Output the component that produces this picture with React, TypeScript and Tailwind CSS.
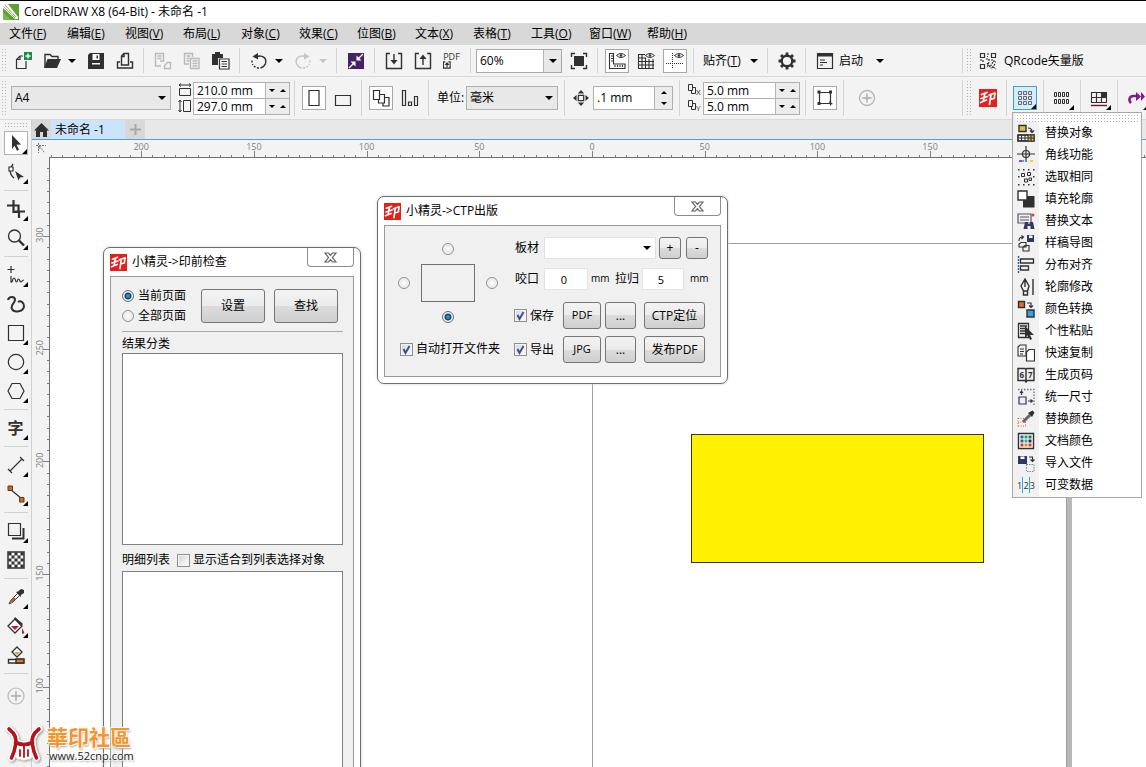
import React from 'react';

type Kids = { children?: React.ReactNode };

function Svg({ s = 18, children }: { s?: number } & Kids) {
  return (
    <svg width={s} height={s} viewBox="0 0 18 18" fill="none" stroke="#303030" strokeWidth="1.4" className="shrink-0" aria-hidden="true">
      {children}
    </svg>
  );
}

const F = { fill: '#303030', stroke: 'none' };

/* ---------- small shared parts ---------- */

function Caret({ up = false, small = false, color = '#000' }: { up?: boolean; small?: boolean; color?: string }) {
  return (
    <svg width={small ? 6 : 8} height={small ? 3 : 4} viewBox="0 0 8 4" aria-hidden="true" className="shrink-0">
      <path d={up ? 'M0 4h8L4 0z' : 'M0 0h8L4 4z'} fill={color} />
    </svg>
  );
}

function Drop({ label, color }: { label: string; color?: string }) {
  return (
    <button aria-label={label} className="flex h-6 w-[15px] shrink-0 items-center pl-0.5">
      <Caret color={color} />
    </button>
  );
}

function Sep() {
  return (
    <div className="flex w-[9px] shrink-0 justify-center self-stretch">
      <div className="w-px bg-[#d4d4d4]" />
    </div>
  );
}

function Grip() {
  return (
    <div className="mx-px w-1.5 shrink-0 self-stretch bg-[radial-gradient(#b4b4b4_0.8px,transparent_1px)] bg-[size:3px_3px]" />
  );
}

function Tool({ label, boxed = false, children }: { label: string; boxed?: boolean } & Kids) {
  return (
    <div className="flex w-[29px] shrink-0 justify-center">
      <button
        aria-label={label}
        className={
          boxed
            ? 'flex h-6 w-6 items-center justify-center border border-[#a8a8a8] bg-white'
            : 'flex h-6 w-6 items-center justify-center'
        }
      >
        {children}
      </button>
    </div>
  );
}

function Corner() {
  return (
    <svg width="5" height="5" viewBox="0 0 5 5" className="absolute right-0 bottom-0" aria-hidden="true">
      <path d="M5 0v5H0z" fill="#000" />
    </svg>
  );
}

function Seal({ s = 17 }: { s?: number }) {
  return (
    <svg width={s} height={s} viewBox="0 0 18 18" className="shrink-0" aria-hidden="true">
      <path d="M0 0h18v18H0z" fill="#e3201b" />
      <g fill="none" stroke="#fff" strokeWidth="1.7" strokeLinecap="round" strokeLinejoin="round">
        <path d="M8 3.500 2.500 5.500M2 9.500 8.500 7.500M1.500 13.500 7.500 11M5.800 5 4.300 12M10 6l6-2-.8 5.500-3.200.8M12 5.500 10.500 15.500" />
      </g>
    </svg>
  );
}

function Spin({ label }: { label: string }) {
  return (
    <div className="flex w-6 items-center justify-around border-l border-[#b4b4b4] bg-[#ececec]">
      <button aria-label={label + ' down'} className="flex h-full flex-1 items-center justify-center">
        <Caret small />
      </button>
      <button aria-label={label + ' up'} className="flex h-full flex-1 items-center justify-center">
        <Caret small up />
      </button>
    </div>
  );
}

function PairField({ items }: { items: { label: string; value: string }[] }) {
  return (
    <div className="w-[97px] shrink-0 border border-[#b0b0b0] bg-white">
      {items.map((it, i) => (
        <div key={it.label} className={i ? 'flex h-4 border-t border-[#b0b0b0]' : 'flex h-[15px]'}>
          <input aria-label={it.label} defaultValue={it.value} className="w-0 flex-1 bg-white pl-[3px] text-xs leading-[15px] outline-none" />
          <Spin label={it.label} />
        </div>
      ))}
    </div>
  );
}

/* ---------- menu and toolbars ---------- */

const MENUS: [string, string][] = [
  ['文件', 'F'], ['编辑', 'E'], ['视图', 'V'], ['布局', 'L'], ['对象', 'C'], ['效果', 'C'],
  ['位图', 'B'], ['文本', 'X'], ['表格', 'T'], ['工具', 'O'], ['窗口', 'W'], ['帮助', 'H'],
];

function TitleBar() {
  return (
    <header className="flex h-[23px] shrink-0 items-center gap-[5px] border-t border-black bg-white pl-[3px]">
      <svg width="16" height="16" viewBox="0 0 16 16" aria-hidden="true">
        <path d="M0 0h16v16H0z" fill="#5aa332" />
        <path d="M0 0h5l10 13v2H12L0 4z" fill="#fff" />
        <path d="m2 1 11 12M1 3l11 11" stroke="#5aa332" strokeWidth=".7" />
        <path d="M0 8l8 8H0z" fill="#79b84a" />
      </svg>
      <h1 className="text-xs">CorelDRAW X8 (64-Bit) - 未命名 -1</h1>
    </header>
  );
}

function MenuBar() {
  return (
    <nav className="flex h-[22px] shrink-0 items-center bg-[#d8d8d8] pl-[9px]">
      {MENUS.map(([name, k]) => (
        <button key={name} className="w-[58px] text-left text-xs whitespace-nowrap">
          {name}(<u>{k}</u>)
        </button>
      ))}
    </nav>
  );
}

function StandardBar() {
  return (
    <div className="flex h-8 shrink-0 border-b border-[#d9d9d9] py-[3px]">
      <div className="flex min-w-0 flex-1 items-center overflow-hidden">
        <Grip />
        <Tool label="New">
          <Svg><path d="M9 4H6L2.500 7.500v9h9.500V9M2.500 7.500H6V4" strokeWidth="1.200" /><path d="M10 0h8v8h-8z" fill="#178c46" stroke="none" /><path d="M14 1.500v5M11.500 4h5" stroke="#fff" /></Svg>
        </Tool>
        <Tool label="Open">
          <Svg><path d="M2 15.500V2.500h5l2 2h6v3" /><path d="M1 16 4.500 7H18l-4 9z" {...F} /></Svg>
        </Tool>
        <Drop label="Recent files" />
        <Tool label="Save">
          <Svg><path d="M1 3l2-2h14v16H1z" {...F} /><path d="M5.500 2h7v6h-7zM5 11h8v1.500H5z" fill="#fff" stroke="none" /><path d="M9.500 3.500h1.500v3H9.500z" {...F} /></Svg>
        </Tool>
        <Tool label="Print">
          <Svg><path d="M4 10H1.500v6h15v-6H14M5.500 13V4l2.500-2.500h4.500V13zM5.500 4.500H8V2" /></Svg>
        </Tool>
        <Sep />
        <Tool label="Cut">
          <Svg><g stroke="#b9b9b9"><path d="M7 14H1.500V1.500h8V9H6M3.500 4h4M3.500 6.500h4" /><path d="M10.500 13.500h1m2-3h3v6h-6v-3z" /></g></Svg>
        </Tool>
        <Tool label="Copy">
          <Svg><g stroke="#b9b9b9"><path d="M6 12H1.500V1.500h8V5M3.500 4h4M3.500 6.500h3M3.500 9h3" /><path d="M7.500 6.500h8.500v10H7.500zM9.500 9h5M9.500 11.500h5M9.500 14h5" /></g></Svg>
        </Tool>
        <Tool label="Paste">
          <Svg><path d="M0 2h3V0h5v2h3v4H6v7H0z" {...F} /><path d="M7.500 7h9.500v10H7.500zM9.500 9.500h5.500M9.500 12h5.500M9.500 14.500h5.500" fill="#fff" strokeWidth="1.200" /></Svg>
        </Tool>
        <Sep />
        <Tool label="Undo">
          <Svg><path d="M6 4.500c7-2 11 2 9.500 7-1 2.500-3 4-5 4.500" /><path d="M9 16c-3 0-5.500-1.500-6.500-4M2 10.500V8" strokeDasharray="2 1.500" /><path d="M2.500 4.500 8 1v6.500z" {...F} /></Svg>
        </Tool>
        <Drop label="Undo history" />
        <Tool label="Redo">
          <Svg><g stroke="#c4c4c4"><path d="M12 4.500c-7-2-11 2-9.500 7 1 2.500 3 4 5 4.500" /><path d="M9 16c3 0 5.500-1.500 6.500-4M16 10.500V8" strokeDasharray="2 1.500" /></g><path d="M15.500 4.500 10 1v6.500z" fill="#c4c4c4" stroke="none" /></Svg>
        </Tool>
        <Drop label="Redo history" color="#c4c4c4" />
        <Sep />
        <Tool label="Search content">
          <Svg><path d="M1 1h16v16H1z" fill="#46216a" stroke="none" /><path d="m16 2-5 5M2 16l5-5" stroke="#fff" /><path d="M9.500 3.500v5h5zM8.500 14.500v-5h-5z" fill="#fff" stroke="none" /></Svg>
        </Tool>
        <Sep />
        <Tool label="Import"><Svg><path d="M5 1.500H1.500v15h15v-15H13M9 2v9" /><path d="M5.500 8h7L9 12.500z" {...F} /></Svg></Tool>
        <Tool label="Export"><Svg><path d="M5 1.500H1.500v15h15v-15H13M9 13V5" /><path d="M5.500 7h7L9 2.500z" {...F} /></Svg></Tool>
        <Tool label="Publish to PDF">
          <span className="flex flex-col items-start text-[9px] leading-[9px] text-[#303030]">
            PDF
            <Svg s={8}><path d="M5 2H1v14h15V2h-4M9 14V6" strokeWidth="2.500" /><path d="M3.500 9h11L9 2z" {...F} /></Svg>
          </span>
        </Tool>
        <Sep />
        <div className="relative ml-px flex h-6 w-[86px] shrink-0 border border-[#a8a8a8] bg-white">
          <select aria-label="Zoom" className="w-full appearance-none pl-[3px] text-xs outline-none"><option>60%</option></select>
          <span className="pointer-events-none absolute inset-y-0 right-0 flex w-[18px] items-center justify-center border-l border-[#b4b4b4] bg-[#e8e8e8]"><Caret /></span>
        </div>
        <div className="ml-0.5 flex">
          <Tool label="Full screen"><Svg><path d="M4 4h10v10H4z" {...F} /><path d="M1.500 5V1.500H5M13 1.500h3.500V5M16.500 13v3.500H13M5 16.500H1.500V13" /></Svg></Tool>
        </div>
        <Sep />
        <Tool label="Show rulers" boxed>
          <Svg><path d="M1.500 1.500h4v10.500H17v4.500H1.500zM3 4h2M3 6.500h2M3 9h2M7 15v-2M9.500 15v-2M12 15v-2M14.500 15v-2" strokeWidth="1.100" /><path d="M8.500 3.500q4.500-4 9 0-4.500 4-9 0z" strokeWidth="1" /><circle cx="13" cy="3.500" r="1.300" {...F} /></Svg>
        </Tool>
        <Tool label="Show grid">
          <Svg><g strokeWidth="1.100"><path d="M1 2.500h7M1 6h8M1 9.500h16M1 13h16M1 16.500h16M1.500 2v15M5 2v15M8.500 6v11M12 7v10M16 7v10" /></g><path d="M8.500 3.500q4.500-4 9 0-4.500 4-9 0z" strokeWidth="1" fill="#fff" /><circle cx="13" cy="3.500" r="1.300" {...F} /></Svg>
        </Tool>
        <Tool label="Show guidelines" boxed>
          <Svg><path d="M6.500 1v16M0 11.500h18" strokeDasharray="1 1" strokeWidth="1" /><path d="M8.500 3.500q4.500-4 9 0-4.500 4-9 0z" strokeWidth="1" /><circle cx="13" cy="3.500" r="1.300" {...F} /></Svg>
        </Tool>
        <Sep />
        <button className="w-[50px] shrink-0 pl-[5px] text-left text-xs whitespace-nowrap">贴齐(<u>T</u>)</button>
        <Drop label="Snap options" />
        <Sep />
        <Tool label="Options">
          <Svg><circle cx="9" cy="9" r="5.300" strokeWidth="2.400" /><path d="M9 .5v3M9 14.500v3M.5 9h3M14.500 9h3M3 3l2 2M13 13l2 2M15 3l-2 2M5 13l-2 2" strokeWidth="2.800" /></Svg>
        </Tool>
        <Sep />
        <Tool label="Launcher">
          <Svg><path d="M1.500 1.500h15v15h-15z" strokeWidth="1.200" /><path d="M1 1h16v3.500H1z" {...F} /><path d="M4 8h5M4 10.500h7M4 13h3" strokeWidth="1" /></Svg>
        </Tool>
        <button className="w-[35px] shrink-0 text-left text-xs">启动</button>
        <Drop label="Launch applications" />
      </div>
      <div className="flex w-[184px] shrink-0 items-center border-l border-[#d4d4d4] pl-0.5">
        <Grip />
        <Tool label="QR code">
          <Svg><path d="M1.500 1.500h4v4h-4zM12.500 1.500h4v4h-4zM1.500 12.500h4v4h-4z" strokeWidth="1.200" /><path d="M8 2h2M8 4.500h1M7 7h3v2M1 8h3v2M12 8h2M15 8v2h2M8 11l4 5M10 10l-2 6M14 10l-3 5M16 12l-4 5M14 15l3 2" strokeDasharray="2 1" strokeWidth="1.200" /></Svg>
        </Tool>
        <button className="pl-0.5 text-xs whitespace-nowrap">QRcode矢量版</button>
      </div>
    </div>
  );
}

function RightTool({ label, active = false, children }: { label: string; active?: boolean } & Kids) {
  return (
    <button
      aria-label={label}
      className={
        active
          ? 'relative mx-0.5 flex h-6 w-6 shrink-0 items-center justify-center border border-[#45a0c8] bg-[#d5ecfa]'
          : 'relative mx-0.5 flex h-6 w-6 shrink-0 items-center justify-center'
      }
    >
      {children}
      <Corner />
    </button>
  );
}

function PropertyBar() {
  return (
    <div className="flex h-[43px] shrink-0 border-b border-[#d9d9d9] py-[3px]">
      <div className="flex min-w-0 flex-1 items-center overflow-hidden">
        <Grip />
        <div className="relative ml-[3px] h-6 w-40 shrink-0 border border-[#b0b0b0] bg-[#e8e8e8]">
          <select aria-label="Page size" className="block h-full w-full appearance-none pl-[3px] text-xs outline-none"><option>A4</option></select>
          <span className="pointer-events-none absolute inset-y-0 right-1 flex items-center"><Caret /></span>
        </div>
        <div className="ml-[7px] flex w-[15px] shrink-0 flex-col gap-0.5">
          <svg width="14" height="14" viewBox="0 0 14 14" fill="none" stroke="#303030" aria-hidden="true"><path d="M1.500 5.500h11v7h-11zM1 2h12M3 .5 1 2l2 1.500M11 .5 13 2l-2 1.500" /></svg>
          <svg width="14" height="14" viewBox="0 0 14 14" fill="none" stroke="#303030" aria-hidden="true"><path d="M5.500 1.500h7v11h-7zM2 1v12M.5 3 2 1l1.500 2M.5 11 2 13l1.500-2" /></svg>
        </div>
        <PairField items={[{ label: 'Page width', value: '210.0 mm' }, { label: 'Page height', value: '297.0 mm' }]} />
        <div className="flex items-center self-stretch">
          <Sep />
          <Tool label="Portrait" boxed><Svg><path d="M4 1.500h10v15H4z" strokeWidth="1.200" /></Svg></Tool>
          <Tool label="Landscape"><Svg><path d="M1.500 6.500h15v10h-15z" strokeWidth="1.200" /></Svg></Tool>
          <Sep />
          <Tool label="All pages" boxed><Svg><path d="M1.500 1.500h6v9h-6z" strokeWidth="1.200" /><path d="M7.500 5.500h5v8.500h-6v-3.500M12.500 8.500h4.500v8.500h-6v-3" strokeWidth="1.200" /></Svg></Tool>
          <Tool label="Current page"><Svg><path d="M1.500 1.500h3v15h-3zM7.500 13h3v3.500h-3zM13.500 7.500h3v9h-3z" strokeWidth="1.200" /></Svg></Tool>
          <Sep />
        </div>
        <label htmlFor="units" className="ml-1 w-[29px] shrink-0 text-xs whitespace-nowrap">单位:</label>
        <div className="relative h-6 w-[92px] shrink-0 border border-[#b0b0b0] bg-[#e8e8e8]">
          <select id="units" className="block h-full w-full appearance-none pl-[3px] text-xs outline-none"><option>毫米</option></select>
          <span className="pointer-events-none absolute inset-y-0 right-1 flex items-center"><Caret /></span>
        </div>
        <div className="ml-0.5 flex items-center self-stretch">
          <Sep />
        </div>
        <div className="flex w-6 shrink-0 justify-center">
          <Svg s={16}><path d="M6 6h6v6H6z" /><path d="M9 0l3.500 4h-7zM9 18l3.500-4h-7zM0 9l4-3.500v7zM18 9l-4-3.500v7z" {...F} /></Svg>
        </div>
        <div className="flex h-6 w-20 shrink-0 border border-[#b0b0b0] bg-white">
          <input aria-label="Nudge distance" defaultValue=".1 mm" className="w-0 flex-1 pl-[3px] text-xs outline-none" />
          <div className="flex w-[18px] flex-col border-l border-[#b4b4b4] bg-[#ececec]">
            <button aria-label="Nudge up" className="flex flex-1 items-center justify-center"><Caret small up /></button>
            <button aria-label="Nudge down" className="flex flex-1 items-center justify-center"><Caret small /></button>
          </div>
        </div>
        <div className="ml-0.5 flex items-center self-stretch">
          <Sep />
        </div>
        <div className="ml-[3px] flex w-4 shrink-0 flex-col gap-0.5">
          {['X', 'Y'].map((a) => (
            <svg key={a} width="15" height="14" viewBox="0 0 15 14" fill="none" stroke="#303030" aria-hidden="true">
              <path d="M1.500 1.500h4v6h-4zM5.500 4.500h3v6h-4v-3" />
              <text x="9" y="12" fontSize="8" fill="#303030" stroke="none">{a}</text>
            </svg>
          ))}
        </div>
        <PairField items={[{ label: 'Duplicate X', value: '5.0 mm' }, { label: 'Duplicate Y', value: '5.0 mm' }]} />
        <div className="ml-px flex items-center self-stretch">
          <Sep />
          <Tool label="Treat as filled" boxed><Svg><path d="M3.500 3.500h11v11h-11z" strokeWidth="1.200" /><path d="M1.500 1.500h3v3h-3zM13 1.500h3v3h-3zM1.500 13h3v3h-3z" {...F} /><path d="m13 12 4 3-2 .5-.5 2z" {...F} /></Svg></Tool>
          <Sep />
        </div>
        <div className="ml-1 flex">
          <Tool label="Customize"><Svg><g stroke="#b8b8b8"><circle cx="9" cy="9" r="7.500" /><path d="M9 4.500v9M4.500 9h9" strokeWidth="1.800" /></g></Svg></Tool>
        </div>
      </div>
      <div className="flex w-[184px] shrink-0 items-center overflow-hidden border-l border-[#d4d4d4] pl-0.5">
        <Grip />
        <Tool label="Plug-in"><Seal s={18} /></Tool>
        <Sep />
        <RightTool label="Object tools" active>
          <svg width="16" height="16" viewBox="0 0 16 16" fill="none" stroke="#666" aria-hidden="true"><path d="M1.500 1.500h3v3h-3zM6.500 1.500h3v3h-3zM11.500 1.500h3v3h-3zM1.500 6.500h3v3h-3zM6.500 6.500h3v3h-3zM11.500 6.500h3v3h-3zM1.500 11.500h3v3h-3zM6.500 11.500h3v3h-3zM11.500 11.500h3v3h-3z" /></svg>
        </RightTool>
        <Sep />
        <RightTool label="Layout tools">
          <svg width="16" height="16" viewBox="0 0 16 16" fill="none" stroke="#303030" aria-hidden="true"><path d="M.5 2.500h2v4h-2zM4.500 2.500h2v4h-2zM8.500 2.500h2v4h-2zM12.500 2.500h2v4h-2zM.5 9.500h2v4h-2zM4.500 9.500h2v4h-2zM8.500 9.500h2v4h-2zM12.500 9.500h2v4h-2z" /></svg>
        </RightTool>
        <Sep />
        <RightTool label="Table tools">
          <Svg><path d="M1.500 3.500h15v10h-15zM6.500 3.500v10M11.500 3.500v10M1.500 8.500h15" strokeWidth="1.100" /><path d="M11.500 4H17v4.500h-5.500z" {...F} /><path d="M1 16.500h16" stroke="#7a1030" /></Svg>
        </RightTool>
        <Sep />
        <RightTool label="Convert tools">
          <Svg><path d="M4 14c-3-3-1.500-7 2.500-7H10" stroke="#86198f" strokeWidth="2.500" /><path d="M9 3v9l5-4.500zM14 3v9l4-4.500z" fill="#86198f" stroke="none" /></Svg>
        </RightTool>
      </div>
    </div>
  );
}

/* ---------- plug-in drop-down ---------- */

const POPUP: [string, React.ReactNode][] = [
  ['替换对象', <><path d="M2 1.500h7v6H2z" fill="#e8bf3c" /><path d="M11 4q4 0 4 4M13 6.500l2 2 2-2" strokeWidth="1.200" /><path d="M1 11h16v6H1z" fill="#fff" /><path d="M11 11h6v6h-6z" fill="#e8bf3c" stroke="none" /><path d="M1 14h16M4.500 11v6M8 11v6M11 11v6M14 11v6M1 11h16v6H1z" strokeWidth="1.100" /></>],
  ['角线功能', <><circle cx="9" cy="8" r="3.500" strokeWidth="1.200" /><path d="M9 0v16M0 8h18" strokeWidth="1.200" /><path d="M2 14h3v2H2z" fill="#d02ad0" stroke="none" /><path d="M5 14h2v2H5z" fill="#28b8e0" stroke="none" /><path d="M13 14h3v2h-3z" fill="#f0d020" stroke="none" /></>],
  ['选取相同', <><path d="M4.500 5.500h3v3h-3zM10.500 4.500h3v3h-3zM7.500 11h3v3h-3zM12 10h2.500v2.500H12z" strokeWidth="1" /><path d="M1 1h1.500v1.500H1zM6 1h1.500v1.500H6zM11 1h1.500v1.500H11zM16 1h1.500v1.500H16zM1 8h1.500v1.500H1zM16 8h1.500v1.500H16zM1 16h1.500v1.500H1zM6 16h1.500v1.500H6zM11 16h1.500v1.500H11zM16 16h1.500v1.500H16z" {...F} /></>],
  ['填充轮廓', <><path d="M6 6h11.500v11.500H6z" {...F} /><path d="M1 1h9v9H1z" fill="#fff" /></>],
  ['替换文本', <><path d="M1 2h13v9H1zM3 5h9M3 8h9" stroke="#556" strokeWidth="1.200" /><circle cx="16" cy="3" r="1.500" fill="#e04030" stroke="none" /><path d="M8 10h3v2h2v-2h3l1.500 7h-4v-3h-3v3h-4z" fill="#303a60" stroke="none" /></>],
  ['样稿导图', <><path d="M10 1h7v7h-7z" fill="#303a60" stroke="none" /><path d="M12 1.500h3.500v2.500H12z" fill="#fff" stroke="none" /><path d="M2 7q0-4 4-4M4.500 1.500 6.500 3l-2 2M2 10l2-1.500h5V13H2zM6 13l2-1.500h4V17H6z" strokeWidth="1.100" /></>],
  ['分布对齐', <><path d="M1.500 0v18" stroke="#2458a8" strokeDasharray="2 1" /><path d="M3.500 3h13v4h-13zM3.500 10h8v4h-8z" strokeWidth="1.300" /></>],
  ['轮廓修改', <><path d="M8 1 4 8l2.500 5h4L12 8zM8 2v7M6.500 13v4h4v-4M16 1v16" strokeWidth="1.400" /></>],
  ['颜色转换', <><path d="M1.500 1.500h6v6h-6z" fill="#e86a24" /><path d="M10 10h7v7h-7z" fill="#3aa0e0" /><path d="M10 3h4v4M12 5.500l2 2 2-2" strokeWidth="1.200" /></>],
  ['个性粘贴', <><path d="M1.500 1.500h10v14h-10zM3 4h7M3 6.500h7M3 9h7M3 11.500h7" strokeWidth="1.300" /><path d="M8 4v12l3-3 2 5 2-1-2-4h4z" {...F} /></>],
  ['快速复制', <><path d="M1 3l2-2h6v11H1zM3 5h4M3 7.500h4M3 10h3" strokeWidth="1.100" /><path d="M9.500 8 12 5.500h5.500V17h-8z" strokeWidth="1.200" fill="#fff" /></>],
  ['生成页码', <><path d="M1 2.500h7l1 1 1-1h7v12h-7l-1 1.500-1-1.500H1zM9 3v13" strokeWidth="1.400" /><text x="2.500" y="12" fontSize="8" fontWeight="700" {...F}>6</text><text x="11" y="12" fontSize="8" fontWeight="700" {...F}>7</text></>],
  ['统一尺寸', <><path d="M1 1.500h16V17" stroke="#778" strokeDasharray="1.500 1.500" /><path d="M2 9h7v7H2zM4.500 7V3M3 5l1.500-2L6 5M11 13h4M13.500 11.500l2 1.500-2 1.500" stroke="#335" strokeWidth="1.200" /></>],
  ['替换颜色', <><path d="M1 8.500h8M1 12h8M1 16h8M1 8v9M8.500 12v5" stroke="#e06040" strokeDasharray="1 1.500" strokeWidth="1" /><path d="m6 12 7-7" strokeWidth="3" stroke="#666" /><path d="m11 3 4 4 2.500-4.500-2-2z" {...F} /></>],
  ['文档颜色', <><path d="M1.500 1.500h15v15h-15z" fill="#fff" /><path d="M3.500 3.500h3v3h-3z" fill="#2b5fb0" stroke="none" /><path d="M7.500 3.500h3v3h-3z" fill="#28a060" stroke="none" /><path d="M11.500 3.500h3v3h-3zM3.500 7.500h3v3h-3z" fill="#1c7a50" stroke="none" /><path d="M7.500 7.500h3v3h-3z" fill="#28a0d0" stroke="none" /><path d="M11.500 7.500h3v3h-3z" fill="#303030" stroke="none" /><path d="M3.500 11.500h3v3h-3zM11.500 11.500h3v3h-3z" fill="#d04030" stroke="none" /><path d="M7.500 11.500h3v3h-3z" fill="#e08030" stroke="none" /></>],
  ['导入文件', <><path d="M1 2h9v8H1z" fill="#303a60" stroke="none" /><path d="M3.500 2.500h4v2.500h-4z" fill="#fff" stroke="none" /><path d="M12 3h3.500v4M13.500 5.500l2 2 2-2" strokeWidth="1.200" /><path d="M9.500 10.500h7.500v7H9.500z" stroke="#889" strokeDasharray="1.500 1" strokeWidth="1.100" /></>],
  ['可变数据', <><g fontSize="9" textAnchor="middle" {...F}><text x="2.500" y="12.500">1</text><text x="9" y="12.500">2</text><text x="15.300" y="12.500">3</text></g><path d="M5.500 1v16M12.500 1v16" stroke="#2aa8e0" strokeWidth="1" /></>],
];

function Popup() {
  return (
    <div className="absolute top-[112px] right-1 z-30 w-[130px] border border-[#a8a8a8] bg-[linear-gradient(to_right,#f1f1f1_26px,#fff_26px)] p-px">
      <div className="mx-0.5 h-2 bg-white bg-[radial-gradient(#b4b4b4_0.8px,transparent_1px)] bg-[size:3px_3px]" />
      {POPUP.map(([name, icon]) => (
        <button key={name} className="flex h-[22px] w-full items-center gap-2.5 pl-[3px] text-xs">
          <Svg>{icon}</Svg>
          {name}
        </button>
      ))}
    </div>
  );
}

/* ---------- toolbox ---------- */

type Item = { label: string; icon: React.ReactNode; fly?: boolean; boxed?: boolean } | null;

const TOOLBOX: Item[] = [
  { label: 'Pick', fly: true, boxed: true, icon: <path d="m5 1 9 9.500-4.500.3 2.500 5-2 1-2.500-5L5 15z" {...F} /> },
  { label: 'Shape', fly: true, icon: <><path d="M6 1Q0 9 7 15" strokeWidth="1.300" /><path d="M2 4h4v4H2z" fill="#fff" strokeWidth="1.200" /><path d="m8 8 9 6-4 .5-1.500 3z" {...F} /></> },
  null,
  { label: 'Crop', fly: true, icon: <path d="M6.500 0v5.500M0 5.500h11.500v6M6.500 5.500v6.500h5.500M8 11.500h10M12 11.500V18" strokeWidth="2.200" /> },
  { label: 'Zoom', fly: true, icon: <><circle cx="7.500" cy="7" r="6" strokeWidth="1.300" /><path d="m12 11.500 5 5" strokeWidth="2.400" /></> },
  null,
  { label: 'Freehand', fly: true, icon: <><path d="M4 0v7M.5 3.500h7" strokeWidth="1.200" /><path d="M4 10v6c2 1 1-4 3-4s1 4 2.500 4 .5-3 2-3 1 3 2.500 3 .5-2 3-2" strokeWidth="1.200" /></> },
  { label: 'Artistic media', icon: <path d="M1 5c1-4 7-4 7 0 0 3-5 5-3 9s12 3 12-3c0-3-3-6-6-4" strokeWidth="2" /> },
  { label: 'Rectangle', fly: true, icon: <path d="M1.500 1.500h15v15h-15z" strokeWidth="1.200" /> },
  { label: 'Ellipse', fly: true, icon: <circle cx="9" cy="9" r="7.700" strokeWidth="1.200" /> },
  { label: 'Polygon', fly: true, icon: <path d="M5 1.500h8L17 9l-4 7.500H5L1 9z" strokeWidth="1.200" /> },
  null,
  { label: 'Text', fly: true, icon: null },
  null,
  { label: 'Dimension', fly: true, icon: <path d="m3 15 12-12M1 13l4 4M13 1l4 4" strokeWidth="1.200" /> },
  { label: 'Connector', fly: true, icon: <><path d="m3 4 12 10" strokeWidth="1.200" /><path d="M1 1h4.500v4.500H1zM12.500 12.500H17V17h-4.500z" fill="#c06a30" stroke="#6a3518" strokeWidth="1" /></> },
  null,
  { label: 'Drop shadow', fly: true, icon: <><path d="M1.500 1.500h12v12h-12z" strokeWidth="1.200" /><path d="M16.500 6v10.500H5" strokeWidth="2" /></> },
  { label: 'Transparency', icon: <><path d="M1 1h16v16H1z" strokeWidth="1.500" />{[0, 1, 2, 3, 4].map((r) => [0, 1, 2, 3, 4].map((c) => ((r + c) % 2 ? null : <path key={r + '-' + c} d={`M${1.5 + c * 3} ${1.5 + r * 3}h3v3h-3z`} {...F} />)))}</> },
  null,
  { label: 'Eyedropper', fly: true, icon: <><path d="m2 16 2-4 7-7 2 2-7 7z" fill="#fff" strokeWidth="1" /><path d="m2 16 2-4 3-3 2 2-3 3z" fill="#b0603a" stroke="none" /><path d="m9 4 2-.5L14 1l3 1v3l-3 2-.5 2z" {...F} /></> },
  { label: 'Fill', fly: true, icon: <><path d="m8 2 7 7-7 7-7-7z" fill="#fff" strokeWidth="1.300" /><path d="m8 0 8 7-2 2-7-7z" {...F} /><path d="M4 9h8l-4 4zM15 11l2.500 5-2.500 1z" fill="#c01838" stroke="none" /></> },
  { label: 'Smart fill', icon: <><path d="m10 1 5 5-5 5-5-5z" fill="#fff" strokeWidth="1.300" /><path d="M7 6h6l-3 3z" fill="#d8a048" stroke="none" /><path d="M1.500 13.500h15v3.500h-15z" fill="#fff" /><path d="M9 13h8v4H9z" fill="#e07820" /></> },
  null,
  { label: 'Customize toolbox', icon: <><circle cx="9" cy="9" r="8" stroke="#b8b8b8" strokeWidth="1.200" /><path d="M9 4v10M4 9h10" stroke="#b8b8b8" strokeWidth="1.800" /></> },
];

function Toolbox() {
  return (
    <aside className="flex w-8 shrink-0 flex-col items-center border-r border-[#d0d0d0]">
      <div className="mt-0.5 mb-px h-[5px] w-6 shrink-0 self-center bg-[radial-gradient(#b4b4b4_0.8px,transparent_1px)] bg-[size:3px_3px]" />
      {TOOLBOX.map((t, i) =>
        t === null ? (
          <div key={i} className="flex h-2 w-6 shrink-0 items-center"><div className="h-px w-full bg-[#d0d0d0]" /></div>
        ) : (
          <div key={i} className={i === TOOLBOX.length - 1 ? 'flex h-[38px] shrink-0 items-center' : 'flex h-[29px] shrink-0 items-center'}>
            <button
              aria-label={t.label}
              className={t.boxed ? 'relative flex h-6 w-6 items-center justify-center border border-[#b0b0b0] bg-white' : 'relative flex h-6 w-6 items-center justify-center'}
            >
              {t.icon ? <Svg>{t.icon}</Svg> : <span className="text-base leading-6 font-bold text-[#303030]">字</span>}
              {t.fly && <Corner />}
            </button>
          </div>
        ),
      )}
    </aside>
  );
}

/* ---------- rulers ---------- */

const STEP = 112.7;
const H_ZERO = 560;
const V_300 = 79;

function HRuler() {
  const ticks = Array.from({ length: 120 }, (_, i) => i - 48);
  return (
    <svg width="100%" height="17" fontSize="9" fill="#808080" className="block">
      {ticks.map((i) => (
        <rect key={i} x={Math.round(H_ZERO + (i * STEP) / 10)} y={i % 10 ? 15 : 11} width="1" height={i % 10 ? 2 : 6} />
      ))}
      {ticks.filter((i) => i % 10 === 0 && i >= -40 && i <= 30).map((i) => (
        <text key={i} x={H_ZERO + (i * STEP) / 10} y="10" textAnchor="middle">{Math.abs(i * 5)}</text>
      ))}
    </svg>
  );
}

function VRuler() {
  const ticks = Array.from({ length: 100 }, (_, i) => i - 6);
  return (
    <svg width="17" height="100%" fontSize="9" fill="#808080" className="block">
      {ticks.map((i) => (
        <rect key={i} y={Math.round(V_300 + (i * STEP) / 10)} x={i % 10 ? 15 : 11} height="1" width={i % 10 ? 2 : 6} />
      ))}
      {ticks.filter((i) => i % 10 === 0 && i >= 0 && i <= 40).map((i) => (
        <text key={i} textAnchor="middle" transform={`translate(11 ${V_300 - 1 + (i * STEP) / 10}) rotate(-90)`}>{Math.abs(300 - i * 5)}</text>
      ))}
    </svg>
  );
}

/* ---------- dialogs ---------- */

function DialogHead({ title }: { title: string }) {
  return (
    <div className="flex h-7 shrink-0 items-center">
      <Seal />
      <h2 className="ml-[5px] flex-1 text-xs">{title}</h2>
      <button aria-label="Close" className="flex h-[19px] w-[47px] items-center justify-center self-start rounded-b-[4px] border border-t-0 border-[#8c8c8c] bg-white">
        <svg width="13" height="11" viewBox="0 0 13 11" aria-hidden="true">
          <path d="M1 1h3.500l2 2.300L8.500 1H12L8.500 5.500 12 10H8.500l-2-2.300L4.500 10H1l3.500-4.500z" fill="#fff" stroke="#606060" strokeWidth="1.200" />
        </svg>
      </button>
    </div>
  );
}

const WBTN = 'flex items-center justify-center rounded-[3px] border border-[#757575] bg-[linear-gradient(#f3f3f3,#ebebeb_50%,#dcdcdc_50%,#cfcfcf)] text-xs whitespace-nowrap';

function Radio({ id, name, checked = false, label }: { id: string; name: string; checked?: boolean; label?: string }) {
  return (
    <input
      id={id}
      type="radio"
      name={name}
      aria-label={label}
      defaultChecked={checked}
      className="h-3 w-3 shrink-0 appearance-none rounded-full border border-[#8e8f8f] bg-[radial-gradient(#fff,#d8d8d8)] shadow-[inset_0_0_0_1px_#f4f4f4] checked:border-[#5a6f80] checked:bg-[radial-gradient(#4ab0e0_0,#12405f_3px,#e8eef2_4px)]"
    />
  );
}

function Check({ id, text, checked = false }: { id: string; text: string; checked?: boolean }) {
  return (
    <div className="flex items-center gap-[3px]">
      <div className="relative h-[13px] w-[13px] shrink-0">
        <input id={id} type="checkbox" defaultChecked={checked} className="peer block h-[13px] w-[13px] appearance-none border border-[#8e8f8f] bg-[linear-gradient(135deg,#d0d4d8,#fff)] shadow-[inset_0_0_0_1px_#f4f4f4]" />
        <svg width="13" height="13" viewBox="0 0 13 13" className="pointer-events-none absolute inset-0 hidden peer-checked:block" aria-hidden="true">
          <path d="m3.500 6 2 4L9.500 3" fill="none" stroke="#3c4f96" strokeWidth="2" />
        </svg>
      </div>
      <label htmlFor={id} className="text-xs whitespace-nowrap">{text}</label>
    </div>
  );
}

function CheckDialog() {
  return (
    <section className="absolute top-[89px] bottom-[-40px] left-[53px] flex w-[258px] flex-col rounded-t-[7px] border border-[#6e6e6e] bg-white px-1.5 shadow-[0_0_3px_#ccc]">
      <DialogHead title="小精灵->印前检查" />
      <div className="flex flex-1 flex-col border border-[#999] bg-[#f0f0f0] pt-2.5 pr-2.5 pl-[11px]">
        <div className="flex items-start border-b border-[#a8a8a8] pb-1.5">
          <div className="flex flex-1 flex-col gap-0.5 text-xs">
            <div className="flex items-center gap-1"><Radio id="cur" name="scope" checked /><label htmlFor="cur" className="leading-[18px]">当前页面</label></div>
            <div className="flex items-center gap-1"><Radio id="all" name="scope" /><label htmlFor="all" className="leading-[18px]">全部页面</label></div>
          </div>
          <button className={WBTN + ' mt-0.5 h-[34px] w-16'}>设置</button>
          <button className={WBTN + ' mt-0.5 mr-[5px] ml-[9px] h-[34px] w-16'}>查找</button>
        </div>
        <h3 className="pt-1 pb-px text-xs leading-4">结果分类</h3>
        <div className="h-[192px] shrink-0 border border-[#808080] bg-white" />
        <div className="flex h-[26px] shrink-0 items-center gap-[7px] pt-1">
          <span className="text-xs">明细列表</span>
          <Check id="fit" text="显示适合到列表选择对象" />
        </div>
        <div className="flex-1 border border-[#808080] bg-white" />
      </div>
    </section>
  );
}

const FIELD = 'h-[22px] border border-[#e2e2e2] bg-white text-center text-[11px] outline-none';

function CtpDialog() {
  return (
    <section className="absolute top-[38px] left-[327px] flex h-[188px] w-[351px] flex-col rounded-[7px] border border-[#6e6e6e] bg-white px-1.5 pb-1.5 shadow-[0_0_3px_#ccc]">
      <DialogHead title="小精灵->CTP出版" />
      <div className="flex flex-1 border border-[#999] bg-[#f0f0f0]">
        <div className="w-[129px] shrink-0 pt-[17px] pl-[13px]">
          <div className="flex w-[100px] flex-col items-center">
            <Radio id="e-top" name="edge" label="Top" />
            <div className="my-[9px] flex w-full items-center justify-between">
              <Radio id="e-left" name="edge" label="Left" />
              <div className="h-[38px] w-[54px] border border-[#707070]" />
              <Radio id="e-right" name="edge" label="Right" />
            </div>
            <Radio id="e-bottom" name="edge" label="Bottom" checked />
          </div>
          <div className="mt-[18px] ml-0.5"><Check id="auto" text="自动打开文件夹" checked /></div>
        </div>
        <div className="flex flex-1 flex-col pt-[11px] text-xs">
          <div className="flex items-center">
            <label htmlFor="plate" className="w-[30px] pl-px whitespace-nowrap">板材</label>
            <div className="relative h-[22px] w-[112px] border border-[#e2e2e2] bg-white">
              <select id="plate" className="h-full w-full appearance-none outline-none"><option></option></select>
              <span className="pointer-events-none absolute inset-y-0 right-1 flex items-center"><Caret /></span>
            </div>
            <button className={WBTN + ' ml-[3px] h-[22px] w-[22px]'}>+</button>
            <button className={WBTN + ' ml-[5px] h-[22px] w-[22px]'}>-</button>
          </div>
          <div className="mt-[9px] flex items-center">
            <label htmlFor="grip" className="w-[30px] pl-px whitespace-nowrap">咬口</label>
            <input id="grip" defaultValue="0" className={FIELD + ' w-11 pr-1'} />
            <span className="w-[27px] pl-[3px] text-[10px]">mm</span>
            <label htmlFor="pull" className="w-[27px] whitespace-nowrap">拉归</label>
            <input id="pull" defaultValue="5" className={FIELD + ' w-[42px] pr-1'} />
            <span className="pl-1.5 text-[10px]">mm</span>
          </div>
          <div className="mt-3 flex items-center">
            <div className="w-[49px]"><Check id="save" text="保存" checked /></div>
            <button className={WBTN + ' h-[27px] w-[38px] text-[11px]'}>PDF</button>
            <button className={WBTN + ' ml-1 h-[27px] w-[31px]'}>...</button>
            <button className={WBTN + ' ml-2 h-[27px] w-[61px]'}>CTP定位</button>
          </div>
          <div className="mt-[7px] flex items-center">
            <div className="w-[49px]"><Check id="export" text="导出" checked /></div>
            <button className={WBTN + ' h-[27px] w-[38px] text-[11px]'}>JPG</button>
            <button className={WBTN + ' ml-1 h-[27px] w-[31px]'}>...</button>
            <button className={WBTN + ' ml-2 h-[27px] w-[61px]'}>发布PDF</button>
          </div>
        </div>
      </div>
    </section>
  );
}

function Watermark() {
  return (
    <a href="#community" className="absolute bottom-1 left-[5px] z-20 flex items-center gap-1">
      <svg width="38" height="38" viewBox="0 0 38 38" aria-hidden="true" className="drop-shadow-[1px_1px_1px_#999]">
        <g fill="none" strokeLinecap="round" strokeLinejoin="round">
          <path d="M4 4q9 7 6.500 16-1 7-4 13M34 4q-9 7-6.500 16 1 7 4 13M10.500 17.500q8.500 4 17 0M14.500 24v7M19 20v12M23.500 24v7" stroke="#fff" strokeWidth="7" />
          <path d="M4 4q9 7 6.500 16-1 7-4 13M34 4q-9 7-6.500 16 1 7 4 13" stroke="#b5121b" strokeWidth="3.600" />
          <path d="M10.500 17.500q8.500 4 17 0" stroke="#b5121b" strokeWidth="3.600" />
          <path d="M15 25v6M19 20v12M23 25v6" stroke="#b5121b" strokeWidth="1.800" />
        </g>
      </svg>
      <span className="flex flex-col [text-shadow:0_0_2px_#fff,1px_1px_1px_#fff,-1px_-1px_1px_#fff,1px_2px_2px_#999]">
        <span className="font-['Noto_Sans_CJK_TC','Noto_Sans_CJK_SC',sans-serif] text-[21px] leading-6 font-bold text-[#f4952c]">華印社區</span>
        <span className="pl-0.5 text-[11px] leading-[15px] text-[#222]">www.52cnp.com</span>
      </span>
    </a>
  );
}

function Workspace() {
  return (
    <div className="flex min-w-0 flex-1 flex-col">
      <div className="flex h-5 shrink-0 border-b border-[#4aa3cb] bg-[#e8e8e8]">
        <button aria-label="Welcome screen" className="flex w-[19px] items-center justify-center bg-[#d8d8d8]">
          <svg width="15" height="14" viewBox="0 0 15 14" aria-hidden="true"><path d="M7.500 0 15 7.500h-2V14H9V9H6v5H2V7.500H0z" fill="#303030" /></svg>
        </button>
        <button className="w-[74px] bg-[#cce4fb] pl-1 text-left text-xs">未命名 -1</button>
        <button aria-label="New document" className="flex w-5 items-center justify-center bg-[#d8d8d8]">
          <svg width="11" height="11" viewBox="0 0 11 11" aria-hidden="true"><path d="M5.500 0v11M0 5.500h11" stroke="#a8a8a8" strokeWidth="2" /></svg>
        </button>
      </div>
      <div className="relative h-[17px] shrink-0">
        <HRuler />
        <svg width="17" height="17" viewBox="0 0 17 17" className="absolute top-0 left-0 bg-[#f3f3f3]" aria-hidden="true">
          <path d="M4 5.500h10M6.500 3v10M7 6l6 7M7 9V6h3" fill="none" stroke="#777" strokeDasharray="2 1" />
        </svg>
      </div>
      <div className="flex min-h-0 flex-1">
        <div className="w-[17px] shrink-0 overflow-hidden"><VRuler /></div>
        <main className="relative min-w-0 flex-1 overflow-hidden border-t border-l border-[#707070] bg-white">
          <div className="absolute top-[90px] bottom-0 left-[1016px] w-[6px] bg-[#b8b8b8]" />
          <div className="absolute top-[85px] bottom-0 left-[542px] w-[475px] border-t border-r border-l border-[#a0a0a0] bg-white" />
          <div className="absolute top-[276px] left-[641px] h-[129px] w-[293px] border border-[#3a3500] bg-[#fff100]" />
          <CheckDialog />
          <CtpDialog />
        </main>
      </div>
    </div>
  );
}

export default function App() {
  return (
    <div className="relative flex h-screen flex-col overflow-hidden bg-[#f3f3f3] font-['Open_Sans','Noto_Sans_CJK_SC',sans-serif] text-black">
      <TitleBar />
      <MenuBar />
      <StandardBar />
      <PropertyBar />
      <div className="flex min-h-0 flex-1">
        <Toolbox />
        <Workspace />
      </div>
      <Popup />
      <Watermark />
    </div>
  );
}
